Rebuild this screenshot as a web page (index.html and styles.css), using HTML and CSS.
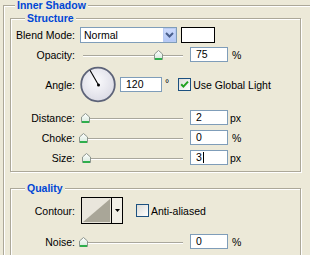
FILE: index.html
```html
<!DOCTYPE html>
<html>
<head>
<meta charset="utf-8">
<title>Inner Shadow</title>
<link rel="stylesheet" href="styles.css">
</head>
<body>
<fieldset class="group outer">
  <legend class="legend legend-outer">Inner Shadow</legend>

  <fieldset class="group sub structure">
    <legend class="legend legend-sub">Structure</legend>

    <div class="row row-blend">
      <span class="label">Blend Mode:</span>
      <div class="combo">
        <span class="combo-text">Normal</span>
        <span class="combo-btn">
          <svg width="9" height="6" viewBox="0 0 9 6"><path d="M1 1 L4.5 4.5 L8 1" fill="none" stroke="#4a5f8c" stroke-width="2"/></svg>
        </span>
      </div>
      <span class="swatch"></span>
    </div>

    <div class="row row-gap4 row-slider">
      <span class="label">Opacity:</span>
      <div class="slider"><span class="track"></span>
        <svg class="thumb" style="left:74px" width="9" height="10" viewBox="0 0 9 10"><defs><linearGradient id="tg1" x1="0" y1="0" x2="0" y2="1"><stop offset="0" stop-color="#ffffff"/><stop offset="1" stop-color="#d6e8dc"/></linearGradient></defs><path d="M0.5 4 L4.5 0.5 L8.5 4 L8.5 9.5 L0.5 9.5 Z" fill="url(#tg1)" stroke="#8d968f"/><rect x="1" y="8" width="7" height="2" fill="#2fae4c"/></svg>
      </div>
      <span class="field">75</span><span class="unit">%</span>
    </div>

    <div class="row row-gap4 row-angle">
      <span class="label">Angle:</span>
      <svg class="dial" width="36" height="37" viewBox="0 0 36 37">
        <defs><radialGradient id="dg" cx="0.45" cy="0.4" r="0.6"><stop offset="0" stop-color="#fbfbfd"/><stop offset="1" stop-color="#dcdce6"/></radialGradient></defs>
        <circle cx="18" cy="18.5" r="16.8" fill="url(#dg)" stroke="#5d6378" stroke-width="1.8"/>
        <line x1="18.5" y1="19" x2="10" y2="4.3" stroke="#000" stroke-width="1.1"/>
        <circle cx="18.5" cy="19" r="1.5" fill="#000"/>
      </svg>
      <span class="field field-angle">120</span><span class="deg">°</span>
      <span class="check"><svg width="11" height="11" viewBox="0 0 11 11"><path d="M2.2 5.2 L4.4 7.6 L9 2.6" fill="none" stroke="#21a121" stroke-width="2"/></svg></span>
      <span class="check-label">Use Global Light</span>
    </div>

    <div class="row row-gap7 row-slider">
      <span class="label">Distance:</span>
      <div class="slider"><span class="track"></span>
        <svg class="thumb" style="left:1px" width="9" height="10" viewBox="0 0 9 10"><defs><linearGradient id="tg2" x1="0" y1="0" x2="0" y2="1"><stop offset="0" stop-color="#ffffff"/><stop offset="1" stop-color="#d6e8dc"/></linearGradient></defs><path d="M0.5 4 L4.5 0.5 L8.5 4 L8.5 9.5 L0.5 9.5 Z" fill="url(#tg2)" stroke="#8d968f"/><rect x="1" y="8" width="7" height="2" fill="#2fae4c"/></svg>
      </div>
      <span class="field">2</span><span class="unit unit-px">px</span>
    </div>

    <div class="row row-gap5 row-slider">
      <span class="label">Choke:</span>
      <div class="slider"><span class="track"></span>
        <svg class="thumb" style="left:-1px" width="9" height="10" viewBox="0 0 9 10"><defs><linearGradient id="tg3" x1="0" y1="0" x2="0" y2="1"><stop offset="0" stop-color="#ffffff"/><stop offset="1" stop-color="#d6e8dc"/></linearGradient></defs><path d="M0.5 4 L4.5 0.5 L8.5 4 L8.5 9.5 L0.5 9.5 Z" fill="url(#tg3)" stroke="#8d968f"/><rect x="1" y="8" width="7" height="2" fill="#2fae4c"/></svg>
      </div>
      <span class="field">0</span><span class="unit">%</span>
    </div>

    <div class="row row-gap5 row-slider">
      <span class="label">Size:</span>
      <div class="slider"><span class="track"></span>
        <svg class="thumb" style="left:2px" width="9" height="10" viewBox="0 0 9 10"><defs><linearGradient id="tg4" x1="0" y1="0" x2="0" y2="1"><stop offset="0" stop-color="#ffffff"/><stop offset="1" stop-color="#d6e8dc"/></linearGradient></defs><path d="M0.5 4 L4.5 0.5 L8.5 4 L8.5 9.5 L0.5 9.5 Z" fill="url(#tg4)" stroke="#8d968f"/><rect x="1" y="8" width="7" height="2" fill="#2fae4c"/></svg>
      </div>
      <span class="field">3<span class="caret"></span></span><span class="unit unit-px">px</span>
    </div>
  </fieldset>

  <fieldset class="group sub quality">
    <legend class="legend legend-sub">Quality</legend>

    <div class="row row-contour">
      <span class="label">Contour:</span>
      <div class="contour">
        <svg class="contour-preview" width="29" height="25" viewBox="0 0 29 25"><rect width="29" height="25" fill="#e9e6dc"/><polygon points="1,24 28,1 28,24" fill="#a9a698"/></svg>
        <span class="contour-btn"><svg width="5" height="3" viewBox="0 0 5 3"><polygon points="0,0 5,0 2.5,3" fill="#000"/></svg></span>
      </div>
      <span class="check check-aa"></span>
      <span class="check-label">Anti-aliased</span>
    </div>

    <div class="row row-gap10 row-slider">
      <span class="label">Noise:</span>
      <div class="slider"><span class="track"></span>
        <svg class="thumb" style="left:-1px" width="9" height="10" viewBox="0 0 9 10"><defs><linearGradient id="tg5" x1="0" y1="0" x2="0" y2="1"><stop offset="0" stop-color="#ffffff"/><stop offset="1" stop-color="#d6e8dc"/></linearGradient></defs><path d="M0.5 4 L4.5 0.5 L8.5 4 L8.5 9.5 L0.5 9.5 Z" fill="url(#tg5)" stroke="#8d968f"/><rect x="1" y="8" width="7" height="2" fill="#2fae4c"/></svg>
      </div>
      <span class="field">0</span><span class="unit">%</span>
    </div>
  </fieldset>
</fieldset>
</body>
</html>
```

FILE: styles.css
```css
html, body {
  margin: 0;
  padding: 0;
  overflow: hidden;
}

body {
  width: 310px;
  height: 255px;
  background: #ece9d8;
  font-family: "Liberation Sans", Arial, sans-serif;
  font-size: 10.5px;
  color: #000;
}

.group {
  box-sizing: border-box;
  margin: 0;
  min-width: 0;
  border: 1px solid #aca899;
  box-shadow: inset 1px 1px 0 #fff, 1px 1px 0 #fff;
}

.outer {
  margin: 0 0 0 3px;
  padding: 3px 0 0 6px;
  width: 340px;
  height: 300px;
}

.legend {
  padding: 0 2px;
  line-height: 11px;
  font-weight: bold;
  color: #0046d5;
  background: #ece9d8;
}

.legend-outer {
  margin-left: 5px;
  line-height: 10px;
}

.legend-sub {
  margin-left: 14px;
}

.sub {
  width: 291px;
  padding: 3px 0 6px 0;
}

.quality {
  margin-top: 11px;
  height: 120px;
}

.row {
  display: flex;
  align-items: center;
}

.label {
  flex: none;
  width: 64px;
  text-align: right;
  white-space: nowrap;
}

.row-blend { height: 16px; }
.row-slider { height: 15px; }
.row-angle { height: 37px; }
.row-contour { height: 27px; }
.row-gap4 { margin-top: 4px; }
.row-gap5 { margin-top: 5px; }
.row-gap7 { margin-top: 7px; }
.row-gap10 { margin-top: 10px; }

/* combo box */
.combo {
  flex: none;
  box-sizing: border-box;
  margin-left: 5px;
  width: 97px;
  height: 16px;
  border: 1px solid #7f9db9;
  background: #fff;
  display: flex;
  align-items: center;
}

.combo-text {
  flex: 1;
  padding-left: 3px;
}

.combo-btn {
  flex: none;
  box-sizing: border-box;
  width: 13px;
  height: 14px;
  border: 1px solid #b9cbf3;
  background: linear-gradient(#cddbfc, #b4c8f6);
  display: flex;
  align-items: center;
  justify-content: center;
}

.swatch {
  flex: none;
  box-sizing: border-box;
  margin-left: 4px;
  width: 34px;
  height: 16px;
  border: 1px solid #000;
  background: #fff;
}

/* slider */
.slider {
  flex: none;
  position: relative;
  margin-left: 5px;
  width: 106px;
  height: 15px;
  display: flex;
  align-items: center;
  padding-left: 3px;
  box-sizing: border-box;
}

.track {
  flex: none;
  width: 100px;
  height: 1px;
  margin-top: 1px;
  background: #a9a79c;
  box-shadow: 0 1px 0 #fff;
}

.thumb {
  position: absolute;
  top: 3px;
}

/* text fields */
.field {
  flex: none;
  box-sizing: border-box;
  margin-left: 4px;
  width: 38px;
  height: 15px;
  border: 1px solid #7f9db9;
  background: #fff;
  padding-left: 5px;
  line-height: 13px;
  display: flex;
  align-items: center;
}

.caret {
  display: inline-block;
  width: 1px;
  height: 11px;
  margin-left: 1px;
  background: #000;
}

.unit {
  margin-left: 4px;
}

.unit-px {
  margin-left: 2px;
}

/* angle */
.dial {
  flex: none;
  margin-left: 5px;
}

.field-angle {
  width: 42px;
  margin-left: 4px;
}

.deg {
  margin-left: 3px;
  margin-top: -3px;
}

.check {
  flex: none;
  box-sizing: border-box;
  margin-left: 9px;
  width: 13px;
  height: 13px;
  border: 1px solid #1c5180;
  background: linear-gradient(135deg, #dcdcd7, #fff);
  display: flex;
  align-items: center;
  justify-content: center;
}

.check-label {
  margin-left: 2px;
  white-space: nowrap;
}

/* contour */
.contour {
  flex: none;
  box-sizing: border-box;
  margin-left: 6px;
  width: 42px;
  height: 27px;
  border: 1px solid #000;
  display: flex;
}

.contour-preview {
  flex: none;
  display: block;
}

.contour-btn {
  flex: 1;
  border-left: 1px solid #000;
  background: #f1efe6;
  display: flex;
  align-items: center;
  justify-content: center;
}

.check-aa {
  margin-left: 13px;
}
```
